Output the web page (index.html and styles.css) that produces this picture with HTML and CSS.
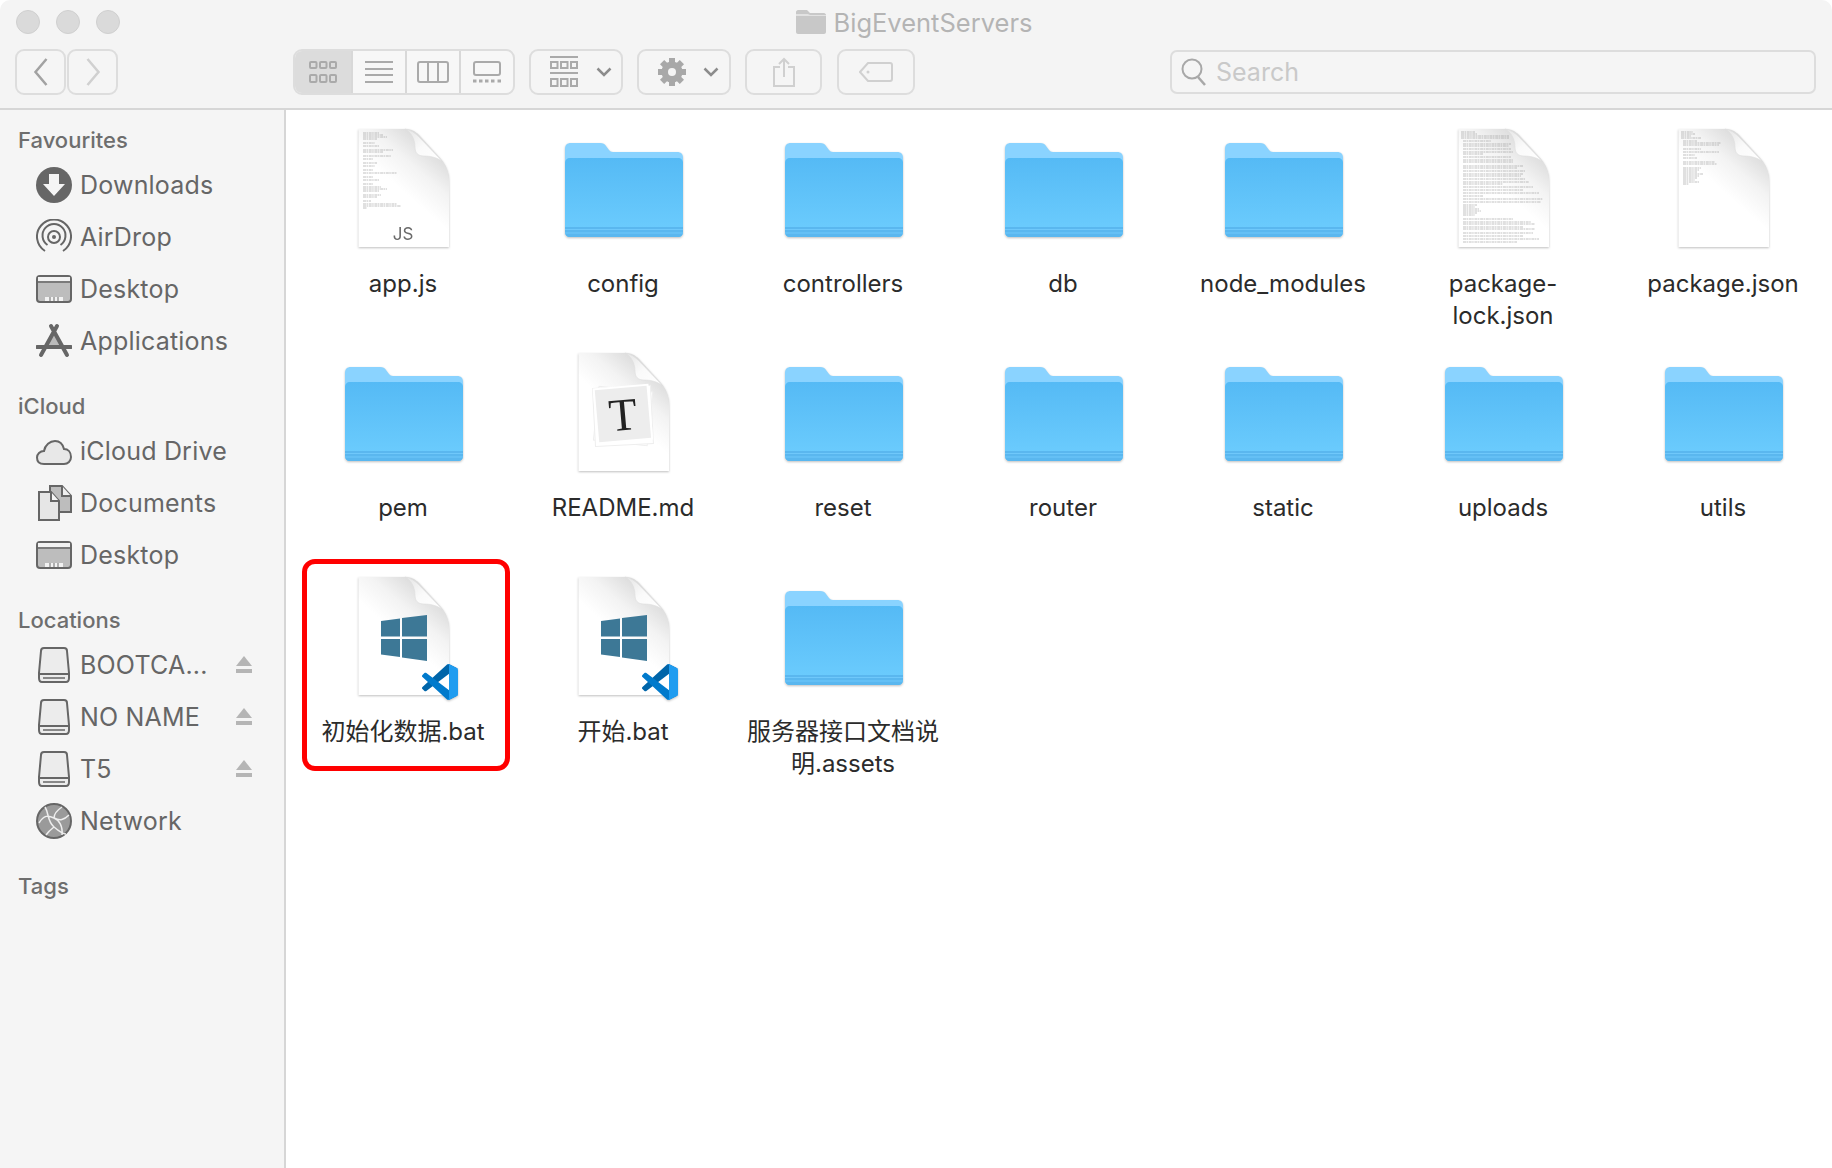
FILE: index.html
```html
<!DOCTYPE html>
<html lang="en">
<head>
<meta charset="utf-8">
<title>BigEventServers</title>
<link rel="stylesheet" href="styles.css">
</head>
<body>
<svg class="defs" width="0" height="0" aria-hidden="true">
  <defs>
    <linearGradient id="g-body" x1="0" y1="0" x2="0" y2="1"><stop offset="0" stop-color="#55baf5"/><stop offset="1" stop-color="#6dcdfe"/></linearGradient>
    <linearGradient id="g-fold" x1="0" y1="0" x2="1" y2="1"><stop offset="0" stop-color="#e4e4e4"/><stop offset=".5" stop-color="#fafafa"/><stop offset="1" stop-color="#ffffff"/></linearGradient>
    <linearGradient id="g-shade" x1=".75" y1="0.05" x2=".45" y2=".5"><stop offset="0" stop-color="#d6d6d6"/><stop offset=".55" stop-color="#f3f3f3"/><stop offset="1" stop-color="#ffffff"/></linearGradient>
    <symbol id="folder" viewBox="0 0 128 128">
      <g transform="translate(1 0)">
      <path d="M5 24c0-4 2-6 6-6h29c3 0 5 1 6 3l3 4c1 1 2 2 4 2h64c4 0 6 2 6 6v30H5z" fill="#8ad3ff"/>
      <path d="M5 38c0-3 2-5 5-5h108c3 0 5 2 5 5v69c0 3-2 5-5 5H10c-3 0-5-2-5-5z" fill="url(#g-body)"/>
      <path d="M5 102h118v5c0 3-2 5-5 5H10c-3 0-5-2-5-5z" fill="#5ab7ef"/>
      <path d="M5 104.500h118M5 108h118" stroke="#6fc8fb" stroke-width="1"/>
      </g>
    </symbol>
    <symbol id="page" viewBox="0 0 128 128">
      <path d="M19.500 4H66C72 4 76 6 80 10L102 34C107 40 110 47 110 56V122H19.500Z" fill="url(#g-shade)"/>
      <path d="M66 4C72 5 76 8 80 12L103 36C97 32 90 31 85 31C79 31 76 28 76 22C76 14 72 7 66 4Z" fill="url(#g-fold)" stroke="#dddddd" stroke-width=".6"/>
    </symbol>
    <symbol id="win" viewBox="0 0 128 128">
      <polygon points="42,48 61,45.500 61,63.500 42,63.500" fill="#3d7896"/>
      <polygon points="63,45 88,42 88,63.500 63,63.500" fill="#3d7896"/>
      <polygon points="42,66 61,66 61,84 42,81.500" fill="#3d7896"/>
      <polygon points="63,66 88,66 88,88 63,84.500" fill="#3d7896"/>
    </symbol>
    <symbol id="vscode" viewBox="0 0 100 100">
      <path fill="#0065A9" d="M96.4614 10.7962L75.8569 0.875542C73.4719 -0.272773 70.6217 0.211611 68.75 2.08333L1.29858 63.5832C-0.515693 65.2373 -0.513607 68.0937 1.30308 69.7452L6.81272 74.754C8.29793 76.1042 10.5347 76.2036 12.1338 74.9905L93.3609 13.3699C96.086 11.3026 100 13.2462 100 16.6667V16.4275C100 14.0265 98.6246 11.8378 96.4614 10.7962Z"/>
      <path fill="#007ACC" d="M96.4614 89.2038L75.8569 99.1245C73.4719 100.273 70.6217 99.7884 68.75 97.9167L1.29858 36.4169C-0.515693 34.7627 -0.513607 31.9063 1.30308 30.2548L6.81272 25.246C8.29793 23.8958 10.5347 23.7964 12.1338 25.0095L93.3609 86.6301C96.086 88.6974 100 86.7538 100 83.3334V83.5726C100 85.9735 98.6246 88.1622 96.4614 89.2038Z"/>
      <path fill="#1F9CF0" d="M75.8578 99.1263C73.4721 100.274 70.6219 99.7885 68.75 97.9166C71.0564 100.223 75 98.5895 75 95.3278V4.67213C75 1.41039 71.0564 -0.223106 68.75 2.08329C70.6219 0.211402 73.4721 -0.273666 75.8578 0.873633L96.4587 10.7807C98.6234 11.8217 100 14.0112 100 16.4132V83.5871C100 85.9891 98.6234 88.1786 96.4586 89.2196L75.8578 99.1263Z"/>
    </symbol>
    <symbol id="batfile" viewBox="0 0 128 128">
      <use href="#page"/>
      <use href="#win"/>
      <use href="#vscode" x="83" y="91" width="36" height="36"/>
    </symbol>
    <symbol id="i-desktop" viewBox="0 0 36 36">
      <rect x="1" y="5" width="34" height="26" rx="3" fill="#bdbdbd" stroke="#666" stroke-width="2"/>
      <path d="M2 6h32v4H2z" fill="#f2f2f2"/><path d="M1 11h34" stroke="#666" stroke-width="1.500"/>
      <path d="M9 30v-4h18v4z" fill="#f2f2f2"/><path d="M14 26v4M18 26v4M22 26v4" stroke="#999" stroke-width="1.500"/>
    </symbol>
    <symbol id="i-drive" viewBox="0 0 36 36">
      <path d="M8 1h20c2 0 3 1 3 3l2 22v5c0 2-1 4-3 4H6c-2 0-3-2-3-4v-5L5 4c0-2 1-3 3-3z" fill="#ececec" stroke="#666" stroke-width="2"/>
      <path d="M3 27h30" stroke="#666" stroke-width="2"/><path d="M7 31h22" stroke="#888" stroke-width="2"/>
    </symbol>
    <symbol id="i-eject" viewBox="0 0 16 18">
      <path d="M8 0l8 10H0z" fill="#b5b5b5"/><path d="M0 13h16v4H0z" fill="#b5b5b5"/>
    </symbol>
    <symbol id="i-squares" viewBox="0 0 28 22">
      <g fill="none" stroke="#aaa" stroke-width="2"><rect x="1" y="1" width="6.500" height="6" rx="1"/><rect x="11" y="1" width="6.500" height="6" rx="1"/><rect x="21" y="1" width="6" height="6" rx="1"/><rect x="1" y="14" width="6.500" height="7" rx="1"/><rect x="11" y="14" width="6.500" height="7" rx="1"/><rect x="21" y="14" width="6" height="7" rx="1"/></g>
    </symbol>
    <symbol id="i-chev" viewBox="0 0 16 10">
      <path d="M1.500 1.500L8 8l6.500-6.500" fill="none" stroke="#8c8c8c" stroke-width="2.500"/>
    </symbol>
  </defs>
</svg>

<div class="window">
  <header class="toolbar">
    <div class="titlerow">
      <div class="lights"><span class="light"></span><span class="light"></span><span class="light"></span></div>
      <div class="title">
        <svg class="title-icon" viewBox="0 0 30 24"><path d="M0 2c0-1 1-2 2-2h9l3 3h14c1 0 2 1 2 2v17c0 1-1 2-2 2H2c-1 0-2-1-2-2z" fill="#c8c8c8"/><path d="M0 4h12l2 1h16v1H0z" fill="#e2e2e2"/></svg>
        <span>BigEventServers</span>
      </div>
      <div></div>
    </div>
    <div class="controls">
      <div class="nav">
        <button class="btn btn-nav"><svg width="16" height="30" viewBox="0 0 16 30"><path d="M13.500 2L2.500 15l11 13" fill="none" stroke="#a2a2a2" stroke-width="2.500"/></svg></button>
        <button class="btn btn-nav"><svg width="16" height="30" viewBox="0 0 16 30"><path d="M2.500 2l11 13-11 13" fill="none" stroke="#d0d0d0" stroke-width="2.500"/></svg></button>
      </div>
      <div class="segment">
        <span class="seg seg-on"><svg class="ico-grid"><use href="#i-squares"/></svg></span>
        <span class="seg"><svg width="28" height="22" viewBox="0 0 28 22"><path d="M0 1h28M0 8h28M0 14h28M0 21h28" stroke="#aaa" stroke-width="2"/></svg></span>
        <span class="seg"><svg width="32" height="22" viewBox="0 0 32 22"><rect x="1" y="1" width="30" height="20" rx="2" fill="none" stroke="#aaa" stroke-width="2"/><path d="M11 1v20M21 1v20" stroke="#aaa" stroke-width="2"/></svg></span>
        <span class="seg"><svg width="28" height="22" viewBox="0 0 28 22"><rect x="1" y="1" width="26" height="13" rx="2" fill="none" stroke="#aaa" stroke-width="2"/><path d="M0 20h3.500M6 20h3.500M12 20h3.500M18 20h3.500M24.500 20H28" stroke="#aaa" stroke-width="3"/></svg></span>
      </div>
      <button class="btn btn-arrange">
        <svg width="28" height="32" viewBox="0 0 28 32"><path d="M0 1h28M0 17h28" stroke="#aaa" stroke-width="2"/><g fill="none" stroke="#aaa" stroke-width="2"><rect x="1" y="6" width="6.500" height="6"/><rect x="11" y="6" width="6.500" height="6"/><rect x="21" y="6" width="6" height="6"/><rect x="1" y="23" width="6.500" height="7"/><rect x="11" y="23" width="6.500" height="7"/><rect x="21" y="23" width="6" height="7"/></g></svg>
        <svg class="ico-chev"><use href="#i-chev"/></svg>
      </button>
      <button class="btn btn-action">
        <svg width="30" height="30" viewBox="0 0 30 30"><g fill="#a8a8a8"><rect x="12" y="1" width="6" height="28"/><rect x="12" y="1" width="6" height="28" transform="rotate(45 15 15)"/><rect x="12" y="1" width="6" height="28" transform="rotate(90 15 15)"/><rect x="12" y="1" width="6" height="28" transform="rotate(135 15 15)"/><circle cx="15" cy="15" r="10.500"/></g><circle cx="15" cy="15" r="4" fill="#f4f4f4"/></svg>
        <svg class="ico-chev"><use href="#i-chev"/></svg>
      </button>
      <button class="btn btn-share"><svg width="22" height="30" viewBox="0 0 22 30"><path d="M7 10H1v19h20V10h-6M11 20V2M6 7l5-5 5 5" fill="none" stroke="#d0d0d0" stroke-width="2"/></svg></button>
      <button class="btn btn-tag"><svg width="34" height="20" viewBox="0 0 34 20"><path d="M9 1h22c1 0 2 1 2 2v14c0 1-1 2-2 2H9L1 10z" fill="none" stroke="#d0d0d0" stroke-width="2"/><circle cx="9" cy="10" r="1.500" fill="#d0d0d0"/></svg></button>
      <label class="search">
        <svg width="26" height="30" viewBox="0 0 26 30"><circle cx="11" cy="12" r="9.500" fill="none" stroke="#a8a8a8" stroke-width="2"/><path d="M17 20l7 8" stroke="#a8a8a8" stroke-width="2.500"/></svg>
        <span>Search</span>
      </label>
    </div>
  </header>

  <div class="body">
    <nav class="sidebar">
      <h2 class="side-head">Favourites</h2>
      <ul class="side-list">
        <li class="side-item"><svg class="side-ico" viewBox="0 0 36 36"><circle cx="18" cy="18" r="18" fill="#666"/><path d="M13 7h10v10h6L18 29 7 17h6z" fill="#f5f5f5"/></svg>Downloads</li>
        <li class="side-item"><svg class="side-ico" viewBox="0 0 36 36"><g fill="none" stroke="#666" stroke-width="2"><path d="M9 32A17 17 0 1 1 27 32"/><path d="M11.500 26A11.500 11.500 0 1 1 24.500 26"/><circle cx="18" cy="18" r="6"/></g><circle cx="18" cy="18" r="2" fill="#666"/></svg>AirDrop</li>
        <li class="side-item"><svg class="side-ico"><use href="#i-desktop"/></svg>Desktop</li>
        <li class="side-item"><svg class="side-ico" viewBox="0 0 36 36"><path d="M18 10l8 14H10z" fill="#bbb"/><g fill="none" stroke="#666" stroke-linecap="round"><path d="M15 3L31 32M21 3L5 32" stroke-width="4"/><path d="M1 24h34" stroke-width="4"/></g></svg>Applications</li>
      </ul>
      <h2 class="side-head">iCloud</h2>
      <ul class="side-list">
        <li class="side-item"><svg class="side-ico" viewBox="0 0 36 36"><path d="M8 31C3 31 1 28 1 24.500 1 21 4 18 8 18c1-6 6-10 11-10 5 0 8 4 9 8 4 0 7 3 7 8 0 4-3 7-7 7z" fill="#e8e8e8" stroke="#666" stroke-width="2"/></svg>iCloud Drive</li>
        <li class="side-item"><svg class="side-ico" viewBox="0 0 36 36"><path d="M14 1h12l9 10v16H14z" fill="#bdbdbd" stroke="#666" stroke-width="2"/><path d="M26 1v10h9" fill="#eee" stroke="#666" stroke-width="2"/><path d="M3 7h12l8 9v19H3z" fill="#e6e6e6" stroke="#666" stroke-width="2"/><path d="M15 7v9h8" fill="#f4f4f4" stroke="#666" stroke-width="2"/></svg>Documents</li>
        <li class="side-item"><svg class="side-ico"><use href="#i-desktop"/></svg>Desktop</li>
      </ul>
      <h2 class="side-head">Locations</h2>
      <ul class="side-list">
        <li class="side-item"><svg class="side-ico"><use href="#i-drive"/></svg>BOOTCA...<svg class="eject"><use href="#i-eject"/></svg></li>
        <li class="side-item"><svg class="side-ico"><use href="#i-drive"/></svg>NO NAME<svg class="eject"><use href="#i-eject"/></svg></li>
        <li class="side-item"><svg class="side-ico"><use href="#i-drive"/></svg>T5<svg class="eject"><use href="#i-eject"/></svg></li>
        <li class="side-item"><svg class="side-ico" viewBox="0 0 36 36"><circle cx="18" cy="18" r="17" fill="#9a9a9a" stroke="#666" stroke-width="2"/><g fill="none" stroke="#eee" stroke-width="1.500"><path d="M3 20C8 12 12 12 18 15s10 2 15-3M9 4c4 6 2 14 9 20s10 7 12 7M26 4C20 8 18 12 18 15M18 24c-4 3-6 5-8 8M18 15c5 2 9 8 8 17"/></g></svg>Network</li>
      </ul>
      <h2 class="side-head">Tags</h2>
    </nav>

    <main class="files">
      <div class="cell">
        <svg class="icon" viewBox="0 0 128 128"><use href="#page"/><path class="doc" d="M24 8h16M24 10h20M24 12h24M24 14h14M24 18h12M24 21h16M24 25h30M24 27h20M24 31h28M24 34h10M24 38h14M24 41h12M24 45h10M24 48h34M24 52h10M24 55h16M24 59h10M24 62h18M24 64h24M24 66h16M24 70h18M24 72h14M24 76h8M24 79h34M24 81h38M24 83h4"/><text class="js" x="64" y="115">JS</text></svg>
        <span class="label">app.js</span>
      </div>
      <div class="cell"><svg class="icon"><use href="#folder"/></svg><span class="label">config</span></div>
      <div class="cell"><svg class="icon"><use href="#folder"/></svg><span class="label">controllers</span></div>
      <div class="cell"><svg class="icon"><use href="#folder"/></svg><span class="label">db</span></div>
      <div class="cell"><svg class="icon"><use href="#folder"/></svg><span class="label">node_modules</span></div>
      <div class="cell">
        <svg class="icon" viewBox="0 0 128 128"><use href="#page"/><path class="doc" d="M22 7h14M22 9h16M22 11h48M22 13h48M24 16h28M24 19h48M24 21h46M24 24h48M24 27h50M24 29h20M24 32h48M24 35h50M24 37h50M24 41h60M24 43h54M24 46h62M24 49h60M24 51h58M24 54h62M24 57h66M24 59h40M24 62h70M24 65h60M24 68h76M24 71h20M24 74h80M24 77h78M24 80h14M24 82h12M24 84h16M24 86h18M24 88h14M24 90h12M24 94h50M24 97h68M24 99h72M24 102h60M24 104h72M24 108h70M24 111h60M24 114h76M24 117h54"/></svg>
        <span class="label">package-lock.json</span>
      </div>
      <div class="cell">
        <svg class="icon" viewBox="0 0 128 128"><use href="#page"/><path class="doc" d="M22 7h12M22 9h14M22 11h10M22 13h20M24 16h14M24 18h38M24 20h36M24 24h18M24 27h36M24 30h12M24 33h14M24 37h32M24 39h34M24 43h18M24 45h16M24 47h14M24 49h20M24 51h16M24 53h14M24 55h12M24 57h16M24 59h6"/></svg>
        <span class="label">package.json</span>
      </div>

      <div class="cell"><svg class="icon"><use href="#folder"/></svg><span class="label">pem</span></div>
      <div class="cell">
        <svg class="icon" viewBox="0 0 128 128"><use href="#page"/>
          <g transform="rotate(6 64 68)"><rect x="37" y="40" width="54" height="54" fill="#fff" stroke="#eeeeee"/></g>
          <g transform="rotate(-3 64 68)"><rect x="35" y="38" width="58" height="58" fill="#fff" stroke="#eeeeee"/></g>
          <g transform="rotate(-5 64 66)"><rect x="37" y="38" width="54" height="54" fill="#ededed" stroke="#fff" stroke-width="2"/><text class="tee" x="64" y="81">T</text></g>
        </svg>
        <span class="label">README.md</span>
      </div>
      <div class="cell"><svg class="icon"><use href="#folder"/></svg><span class="label">reset</span></div>
      <div class="cell"><svg class="icon"><use href="#folder"/></svg><span class="label">router</span></div>
      <div class="cell"><svg class="icon"><use href="#folder"/></svg><span class="label">static</span></div>
      <div class="cell"><svg class="icon"><use href="#folder"/></svg><span class="label">uploads</span></div>
      <div class="cell"><svg class="icon"><use href="#folder"/></svg><span class="label">utils</span></div>

      <div class="cell cell-marked"><svg class="icon"><use href="#batfile"/></svg><span class="label">初始化数据.bat</span></div>
      <div class="cell"><svg class="icon"><use href="#batfile"/></svg><span class="label">开始.bat</span></div>
      <div class="cell"><svg class="icon"><use href="#folder"/></svg><span class="label">服务器接口文档说明.assets</span></div>
    </main>
  </div>
</div>
</body>
</html>
```
FILE: styles.css
```css
*, *::after { box-sizing: border-box; }
html, body { margin: 0; height: 100%; background: #fff; }
body { font-family: "Inter", "Noto Sans CJK SC", sans-serif; overflow: hidden; }
.defs { display: block; height: 0; }

.window { height: 100vh; display: flex; flex-direction: column; border-radius: 10px 10px 0 0; overflow: hidden; }

/* toolbar */
.toolbar { height: 110px; flex: none; background: #f4f4f4; border-bottom: 2px solid #d6d6d6; }
.titlerow { height: 49px; display: grid; grid-template-columns: 1fr auto 1fr; align-items: center; padding-bottom: 5px; }
.lights { display: flex; gap: 16px; padding-left: 16px; }
.light { width: 24px; height: 24px; border-radius: 50%; background: #dadada; border: 1px solid #cfcfcf; }
.title { display: flex; align-items: center; gap: 8px; font-size: 25.500px; color: #b4b4b4; transform: translateX(-2px); }
.title-icon { width: 30px; height: 24px; }

.controls { display: flex; align-items: center; padding: 0 16px 0 15px; height: 46px; }
.btn { display: flex; align-items: center; justify-content: center; height: 46px; padding: 0; background: #f5f5f5; border: 2px solid #dddddd; border-radius: 9px; }
.nav { display: flex; gap: 1px; }
.btn-nav { width: 51px; }
.segment { display: flex; width: 222px; height: 46px; margin-left: 175px; border: 2px solid #dddddd; border-radius: 9px; overflow: hidden; background: #f7f7f7; }
.seg { flex: 1; display: flex; align-items: center; justify-content: center; border-left: 2px solid #d8d8d8; }
.seg:first-child { border-left: 0; }
.seg-on { flex: none; width: 56px; background: #dcdcdc; }
.ico-grid { width: 28px; height: 22px; }
.ico-chev { width: 16px; height: 10px; }
.btn-arrange { width: 94px; margin-left: 14px; gap: 18px; padding-left: 10px; }
.btn-action { width: 94px; margin-left: 14px; gap: 16px; padding-left: 8px; }
.btn-share { width: 77px; margin-left: 14px; }
.btn-tag { width: 78px; margin-left: 15px; }
.search { display: flex; align-items: center; gap: 9px; width: 646px; height: 44px; margin-left: auto; padding-left: 9px; background: #f5f5f5; border: 2px solid #dddddd; border-radius: 7px; font-size: 25px; color: #c9c9c9; }

/* body */
.body { flex: 1; display: flex; min-height: 0; }
.sidebar { width: 286px; flex: none; padding: 14px 32px 0 18px; background: #f5f5f5; border-right: 2px solid #d6d6d6; }
.side-head { margin: 0 0 3px; height: 32px; line-height: 32px; font-size: 22px; font-weight: 500; color: #6e6e6e; }
.side-list { list-style: none; margin: 0 0 23px; padding: 0 0 0 18px; }
.side-item { display: flex; align-items: center; gap: 8px; height: 52px; font-size: 25px; letter-spacing: .2px; color: #666; }
.side-ico { width: 36px; height: 36px; flex: none; }
.eject { width: 16px; height: 18px; margin-left: auto; }

/* files */
.files { flex: 1; display: grid; grid-template-columns: repeat(7, 220px); grid-auto-rows: 224px; align-content: start; padding: 15px 0 0 7px; }
.cell { position: relative; display: flex; flex-direction: column; align-items: center; }
.icon { width: 128px; height: 128px; flex: none; filter: drop-shadow(0 1px 1px rgba(0,0,0,.25)); }
.label { width: 200px; margin-top: 15px; font-size: 24px; line-height: 32px; color: #2b2b2b; text-align: center; }
.cell-marked::after { content: ""; position: absolute; top: -14px; left: 9px; width: 208px; height: 212px; border: 5px solid #ff0000; border-radius: 13px; }

.doc { fill: none; stroke: #999; stroke-width: .6; stroke-dasharray: 3 .5 1.500 .7; }
.js { font-family: "Inter", sans-serif; font-size: 17px; fill: #6a6a6a; text-anchor: middle; }
.tee { font-family: "Liberation Serif", serif; font-size: 46px; fill: #222; text-anchor: middle; }
```
